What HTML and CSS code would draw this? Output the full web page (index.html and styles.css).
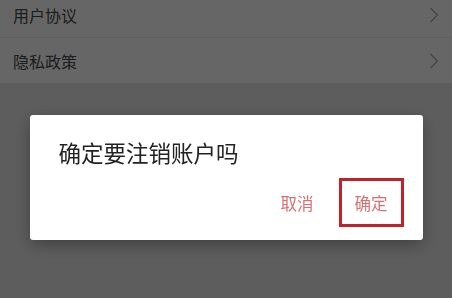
FILE: index.html
```html
<!DOCTYPE html>
<html lang="zh">

<head>
    <meta charset="UTF-8" />
    <meta name="viewport" content="width=device-width, initial-scale=1.0" />
    <title>设置</title>
    <link rel="stylesheet" href="styles.css">
</head>

<body>
    <ul class="menu">
        <li class="menu-item">
            <span>用户协议</span>
            <svg class="arrow" width="10" height="16" viewBox="0 0 10 16">
                <path d="M1.5 1 L8.5 8 L1.5 15" fill="none" stroke="currentColor" stroke-width="1.2" />
            </svg>
        </li>
        <li class="menu-item">
            <span>隐私政策</span>
            <svg class="arrow" width="10" height="16" viewBox="0 0 10 16">
                <path d="M1.5 1 L8.5 8 L1.5 15" fill="none" stroke="currentColor" stroke-width="1.2" />
            </svg>
        </li>
    </ul>
    <!-- 
        注销确认弹窗
     -->
    <div class="mask">
        <div class="dialog">
            <p class="dialog-title">确定要注销账户吗</p>
            <div class="dialog-btns">
                <a class="btn" href="javascript:;">取消</a>
                <a class="btn btn-active" href="javascript:;">确定</a>
            </div>
        </div>
    </div>
</body>

</html>
```

FILE: styles.css
```css
* {
    margin: 0;
    padding: 0;
    box-sizing: border-box;
}

ul {
    list-style: none;
}

body {
    background-color: #e8e8e8;
    font-family: "Noto Sans CJK SC", sans-serif;
}

.menu {
    margin-top: -8px;
    background-color: #fff;
}

.menu-item {
    height: 46px;
    padding: 0 13px;
    display: flex;
    align-items: center;
    justify-content: space-between;
    border-bottom: 1px solid #eee;
    font-size: 16px;
    color: #4a4a4a;
}

.menu-item:last-child {
    border-bottom: none;
    height: 45px;
}

.arrow {
    color: #aaa;
}

/* 
    遮罩和弹窗
*/
.mask {
    position: fixed;
    left: 0;
    top: 0;
    right: 0;
    bottom: 0;
    background-color: rgba(0, 0, 0, 0.6);
    display: flex;
    justify-content: center;
    align-items: flex-start;
    padding-top: 115px;
}

.dialog {
    width: 393px;
    height: 125px;
    background-color: #fff;
    border-radius: 3px;
    box-shadow: 0 5px 16px rgba(0, 0, 0, 0.3);
    padding: 23px 19px 13px 29px;
    display: flex;
    flex-direction: column;
    justify-content: space-between;
}

.dialog-title {
    font-size: 22.5px;
    line-height: 28px;
    color: #222;
}

.dialog-btns {
    display: flex;
    justify-content: flex-end;
}

.btn {
    height: 49px;
    padding: 0 13px;
    margin-left: 9px;
    border: 3px solid transparent;
    display: flex;
    align-items: center;
    font-size: 16.5px;
    color: #d9706f;
    text-decoration: none;
}

.btn-active {
    border-color: #c1212a;
}
```
